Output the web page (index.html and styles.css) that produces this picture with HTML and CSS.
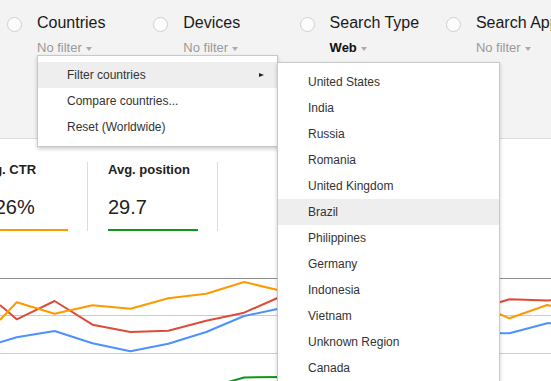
FILE: index.html
```html
<!DOCTYPE html>
<html>
<head>
<meta charset="utf-8">
<link rel="stylesheet" href="styles.css">
</head>
<body>
<div class="page">
  <header class="filters">
    <div class="filter">
      <span class="radio"></span>
      <div class="filter-text">
        <div class="filter-title">Countries</div>
        <div class="filter-value">No filter<span class="caret"></span></div>
      </div>
    </div>
    <div class="filter">
      <span class="radio"></span>
      <div class="filter-text">
        <div class="filter-title">Devices</div>
        <div class="filter-value">No filter<span class="caret"></span></div>
      </div>
    </div>
    <div class="filter">
      <span class="radio"></span>
      <div class="filter-text">
        <div class="filter-title">Search Type</div>
        <div class="filter-value active">Web<span class="caret"></span></div>
      </div>
    </div>
    <div class="filter">
      <span class="radio"></span>
      <div class="filter-text">
        <div class="filter-title">Search Appearance</div>
        <div class="filter-value">No filter<span class="caret"></span></div>
      </div>
    </div>
  </header>

  <section class="metrics">
    <div class="metric">
      <div class="metric-label">Avg. CTR</div>
      <div class="metric-value">3.26%</div>
      <div class="metric-bar orange"></div>
    </div>
    <div class="metric">
      <div class="metric-label">Avg. position</div>
      <div class="metric-value">29.7</div>
      <div class="metric-bar green"></div>
    </div>
  </section>

  <svg class="chart" width="551" height="141" viewBox="0 240 551 141">
    <line x1="0" y1="278.5" x2="551" y2="278.5" class="grid-main"/>
    <line x1="0" y1="315.5" x2="551" y2="315.5" class="grid"/>
    <line x1="0" y1="353.5" x2="551" y2="353.5" class="grid"/>
    <polyline class="l-blue" points="0,342.3 16.7,337.3 54.6,331 92.5,343.3 130.4,351.3 168.3,343.7 206.2,332 244.1,316 282,308 319.9,312 357.8,318 395.7,322 433.6,328 471.5,333 509.4,333.3 547.3,323.3 585.2,324"/>
    <polyline class="l-red" points="0,305 16.7,319.3 54.6,301 92.5,324.7 130.4,332 168.3,330.7 206.2,320.7 244.1,312.7 282,296 319.9,300 357.8,305 395.7,308 433.6,312 471.5,311 509.4,299.3 547.3,300.5 585.2,298"/>
    <polyline class="l-orange" points="0,320 16.7,302.3 54.6,313.7 92.5,305.3 130.4,308.7 168.3,298.3 206.2,293.7 244.1,282 282,291 319.9,296 357.8,300 395.7,298 433.6,304 471.5,302 509.4,318.3 547.3,305 585.2,312"/>
    <polyline class="l-green" points="200,390 244.1,377.5 282,377 319.9,376.5"/>
  </svg>

  <div class="menu">
    <div class="menu-item selected">Filter countries<span class="submenu-arrow"></span></div>
    <div class="menu-item">Compare countries...</div>
    <div class="menu-item">Reset (Worldwide)</div>
  </div>

  <div class="submenu">
    <div class="menu-item">United States</div>
    <div class="menu-item">India</div>
    <div class="menu-item">Russia</div>
    <div class="menu-item">Romania</div>
    <div class="menu-item">United Kingdom</div>
    <div class="menu-item selected">Brazil</div>
    <div class="menu-item">Philippines</div>
    <div class="menu-item">Germany</div>
    <div class="menu-item">Indonesia</div>
    <div class="menu-item">Vietnam</div>
    <div class="menu-item">Unknown Region</div>
    <div class="menu-item">Canada</div>
  </div>
</div>
</body>
</html>
```

FILE: styles.css
```css
* { box-sizing: border-box; }

html, body {
  margin: 0;
  padding: 0;
  background: #fff;
  overflow: hidden;
}

body {
  font-family: "Liberation Sans", Arial, sans-serif;
  color: #222;
}

.page {
  position: relative;
  width: 551px;
  height: 381px;
  overflow: hidden;
}

/* ---------- filter header ---------- */
.filters {
  display: flex;
  height: 139px;
  padding: 13px 0 0 7px;
  background: #f3f3f3;
  border-bottom: 1px solid #dcdcdc;
  overflow: hidden;
  white-space: nowrap;
}

.filter {
  display: flex;
  flex: 0 0 146.3px;
  align-items: flex-start;
  gap: 15px;
}

.radio {
  flex: 0 0 15px;
  width: 15px;
  height: 15px;
  margin-top: 4px;
  border: 1px solid #cfcfcf;
  border-radius: 50%;
  background: #fcfcfc;
}

.filter-title {
  font-size: 16px;
  line-height: 20px;
  color: #1a1a1a;
}

.filter-value {
  margin-top: 7px;
  font-size: 13px;
  line-height: 16px;
  color: #999;
  display: flex;
  align-items: center;
}

.filter-value.active {
  color: #111;
  font-weight: bold;
}

.caret {
  display: inline-block;
  margin-left: 4px;
  margin-top: 1px;
  width: 0;
  height: 0;
  border-left: 3.5px solid transparent;
  border-right: 3.5px solid transparent;
  border-top: 4px solid #aaa;
}

/* ---------- metrics ---------- */
.metrics {
  display: flex;
  margin-left: -42px;
  padding-top: 23px;
}

.metric {
  width: 130px;
  padding-left: 20px;
  border-right: 1px solid #dcdcdc;
}

.metric-label {
  font-size: 13px;
  line-height: 16px;
  font-weight: bold;
  color: #222;
}

.metric-value {
  margin-top: 17px;
  font-size: 20px;
  line-height: 24px;
  color: #222;
}

.metric-bar {
  margin-top: 10px;
  width: 90px;
  height: 2px;
}

.metric-bar.orange { background: #ff9900; }
.metric-bar.green { background: #109618; }

/* ---------- chart ---------- */
.chart {
  display: block;
  margin-top: 9px;
}

.grid-main { stroke: #8c8c8c; stroke-width: 1; }
.grid { stroke: #cccccc; stroke-width: 1; }

.chart polyline {
  fill: none;
  stroke-width: 2;
  stroke-linejoin: round;
}

.l-blue { stroke: #4d90fe; }
.l-red { stroke: #dd4b39; }
.l-orange { stroke: #ff9900; }
.l-green { stroke: #109618; }

/* ---------- menus ---------- */
.menu,
.submenu {
  position: absolute;
  background: #fff;
  border: 1px solid #c8c8c8;
  box-shadow: 0 2px 4px rgba(0, 0, 0, 0.2);
  padding: 6px 0;
  font-size: 12px;
  color: #333;
}

.menu {
  left: 37px;
  top: 55px;
  width: 241px;
  z-index: 2;
}

.submenu {
  left: 277px;
  top: 62px;
  width: 223px;
  z-index: 3;
}

.menu-item {
  height: 26px;
  line-height: 26px;
  padding-left: 29px;
  white-space: nowrap;
}

.submenu .menu-item {
  padding-left: 30px;
}

.menu-item.selected {
  background: #eeeeee;
}

.menu .menu-item {
  display: flex;
  justify-content: space-between;
  align-items: center;
  padding-right: 13px;
}

.submenu-arrow {
  width: 0;
  height: 0;
  border-top: 2.5px solid transparent;
  border-bottom: 2.5px solid transparent;
  border-left: 5px solid #222;
}
```
